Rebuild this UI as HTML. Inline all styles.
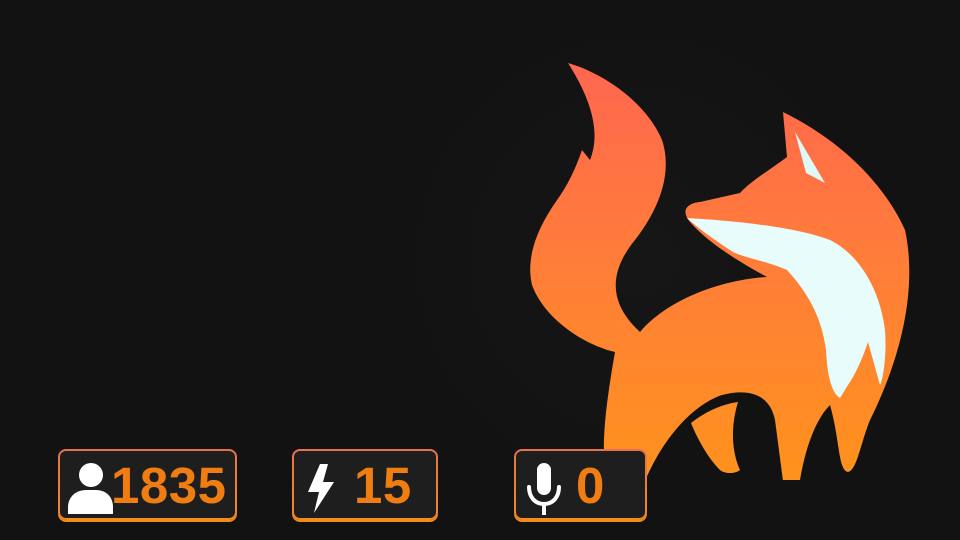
<!DOCTYPE html>
<html><head><meta charset="utf-8"><style>
html,body{margin:0;padding:0;width:960px;height:540px;overflow:hidden;background:#121212;font-family:"Liberation Sans",sans-serif}
.box{position:absolute;top:449px;height:71px;border-radius:8px;background:linear-gradient(#e8704e,#f58a1e);padding:2px;box-sizing:border-box;box-shadow:0 2px 0 #f28a1c}
.box .in{width:100%;height:100%;background:#1e1e1e;border-radius:6px;position:relative}
.num{position:absolute;top:7px;font-weight:bold;font-size:51px;color:#f07d12;line-height:56px;letter-spacing:0.5px}
svg.i{position:absolute}
</style></head><body>
<svg width="960" height="540" style="position:absolute;left:0;top:0">
<defs>
<linearGradient id="g" x1="0" y1="60" x2="0" y2="480" gradientUnits="userSpaceOnUse">
<stop offset="0" stop-color="#ff6650"/><stop offset="0.5" stop-color="#ff7e38"/><stop offset="1" stop-color="#ff921c"/></linearGradient>
<radialGradient id="bg" cx="640" cy="260" r="260" gradientUnits="userSpaceOnUse"><stop offset="0" stop-color="#161616"/><stop offset="1" stop-color="#121212"/></radialGradient>
</defs>
<rect x="380" y="0" width="580" height="540" fill="url(#bg)"/>
<path fill="url(#g)" d="M568,63 C600,72 645,100 662,140 C672,170 662,205 635,240 C612,268 605,300 640,332
C667,300 720,280 767,277 C745,265 710,245 690,222 C680,210 688,203 700,202 L740,193 C752,180 770,170 787,157 L783,112 C830,135 880,175 905,230 C918,290 900,360 870,420 C860,445 857,470 848,472 C838,470 840,440 830,405 C815,420 805,450 800,480
L606,480 C602,450 603,420 615,352
C585,345 545,320 532,285 C525,255 540,225 555,203 C568,185 575,170 582,150 L590,160 C598,140 598,110 568,63Z"/>
<path fill="#121212" d="M645,481 C662,440 692,405 722,395 C750,388 770,395 775,420 L783,481 Z"/>
<path fill="url(#g)" d="M691,423 C705,412 722,404 738,402 C731,425 731,450 740,470 C735,474 725,474 720,470 C708,458 698,440 691,423Z"/>
<path fill="#e8fcfc" d="M687,218 C720,220 790,225 830,240 C860,255 880,290 885,330 C887,355 883,380 880,385 L868,342 C862,360 855,375 848,385 L840,398 C830,392 827,370 826,350 C822,320 810,295 787,270 C770,262 745,258 733,252 C715,240 700,230 687,218Z"/>
<path fill="#dff8f8" d="M795,132 L825,183 L806,173Z"/>
</svg>

<div class="box" style="left:58px;width:179px"><div class="in">
<svg class="i" style="left:6px;top:6px" width="48" height="58" viewBox="0 0 48 58"><circle cx="25" cy="18" r="12" fill="#fff"/><path d="M2,57 L2,50 C2,40 10,33 20,33 L30,33 C40,33 47,40 47,50 L47,57Z" fill="#fff"/></svg>
<div class="num" style="left:51px">1835</div></div></div>

<div class="box" style="left:292px;width:146px"><div class="in">
<svg class="i" style="left:12px;top:13px" width="30" height="50" viewBox="0 0 30 50"><path d="M14,0 L2,28 L13,28 L8,49 L28,18 L17,18 L22,0Z" fill="#fff"/></svg>
<div class="num" style="left:60px">15</div></div></div>

<div class="box" style="left:514px;width:133px"><div class="in">
<svg class="i" style="left:10px;top:12px" width="36" height="54" viewBox="0 0 36 54"><rect x="11" y="0" width="14" height="32" rx="7" fill="#fff"/><path d="M3,24 C3,34 9,41 18,41 C27,41 33,34 33,24" stroke="#fff" stroke-width="4" fill="none" stroke-linecap="round"/><rect x="16" y="40" width="4" height="12" fill="#fff"/></svg>
<div class="num" style="left:60px">0</div></div></div>
</body></html>
